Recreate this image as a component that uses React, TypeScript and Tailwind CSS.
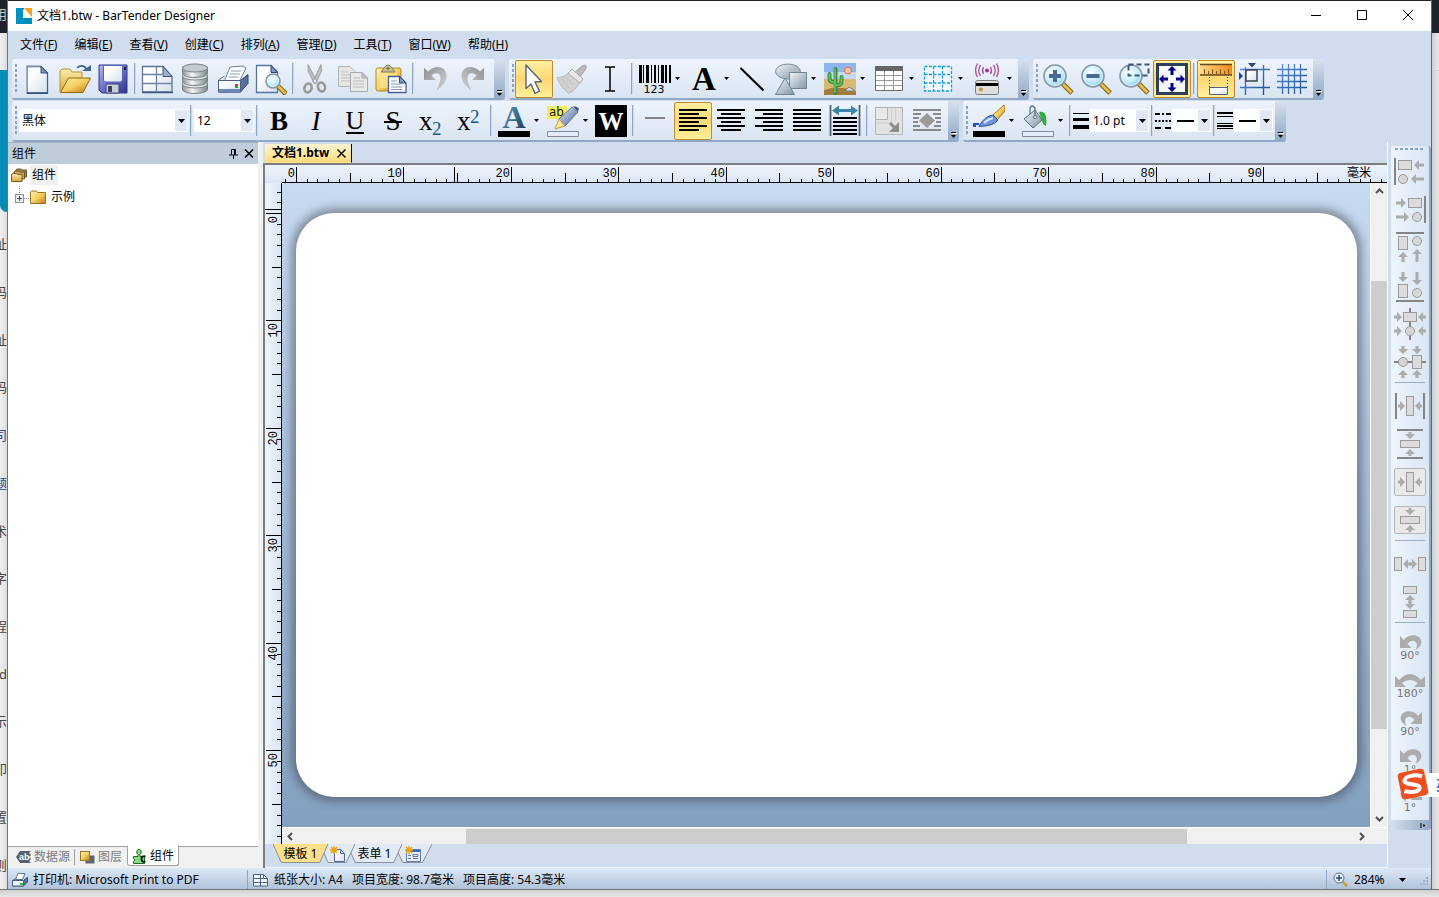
import React from "react";

type Kids = { children?: React.ReactNode };

const INK = "#000000";

function Defs() {
  return (
    <svg width="0" height="0" className="absolute" aria-hidden="true">
      <defs>
        <linearGradient id="paper" x1="0" y1="0" x2="1" y2="1">
          <stop offset="0.3" stopColor="#ffffff" />
          <stop offset="1" stopColor="#d5dfec" />
        </linearGradient>
        <linearGradient id="gold" x1="0" y1="0" x2="1" y2="1">
          <stop offset="0" stopColor="#fff0b0" />
          <stop offset="0.5" stopColor="#f6cf62" />
          <stop offset="1" stopColor="#b87a10" />
        </linearGradient>
        <linearGradient id="folder" x1="0" y1="0" x2="0" y2="1">
          <stop offset="0" stopColor="#fdeeb0" />
          <stop offset="1" stopColor="#d9a53a" />
        </linearGradient>
        <linearGradient id="floppy" x1="0" y1="0" x2="1" y2="1">
          <stop offset="0" stopColor="#b3b8ee" />
          <stop offset="0.5" stopColor="#6a70c4" />
          <stop offset="1" stopColor="#2f3590" />
        </linearGradient>
        <linearGradient id="metal" x1="0" y1="0" x2="1" y2="0">
          <stop offset="0" stopColor="#8d979c" />
          <stop offset="0.4" stopColor="#f4f6f7" />
          <stop offset="1" stopColor="#7b868c" />
        </linearGradient>
        <linearGradient id="steel" x1="0" y1="0" x2="1" y2="1">
          <stop offset="0" stopColor="#f2f6f9" />
          <stop offset="1" stopColor="#8095a4" />
        </linearGradient>
        <linearGradient id="blueprint" x1="0" y1="0" x2="1" y2="1">
          <stop offset="0" stopColor="#e8f1fb" />
          <stop offset="1" stopColor="#3c5a94" />
        </linearGradient>
        <linearGradient id="gridblue" x1="0" y1="0" x2="32" y2="32" gradientUnits="userSpaceOnUse">
          <stop offset="0" stopColor="#5b95e0" />
          <stop offset="1" stopColor="#1d4a94" />
        </linearGradient>
        <linearGradient id="gray" x1="0" y1="0" x2="1" y2="1">
          <stop offset="0" stopColor="#8f9092" />
          <stop offset="1" stopColor="#d2d4d6" />
        </linearGradient>
        <linearGradient id="letter" x1="0" y1="0" x2="1" y2="1">
          <stop offset="0" stopColor="#6aa3c6" />
          <stop offset="1" stopColor="#123a56" />
        </linearGradient>
        <linearGradient id="rulerfill" x1="0" y1="0" x2="1" y2="0">
          <stop offset="0" stopColor="#ffd98c" />
          <stop offset="1" stopColor="#f08a10" />
        </linearGradient>
        <radialGradient id="lens" cx="0.4" cy="0.35" r="0.7">
          <stop offset="0" stopColor="#ffffff" />
          <stop offset="0.6" stopColor="#c3ecfb" />
          <stop offset="1" stopColor="#74c4e8" />
        </radialGradient>
      </defs>
    </svg>
  );
}

function Ico({ children }: Kids) {
  return (
    <svg width="32" height="32" viewBox="0 0 32 32" fill="none" className="shrink-0" aria-hidden="true">
      {children}
    </svg>
  );
}

function Lens({ cx = 12, cy = 12, r = 11, children }: Kids & { cx?: number; cy?: number; r?: number }) {
  return (
    <>
      <path d={`M${cx + r * 0.7} ${cy + r * 0.7}L${cx + r + 6} ${cy + r + 6}`} stroke="#7d6118" strokeWidth="5" />
      <path d={`M${cx + r * 0.75} ${cy + r * 0.75}L${cx + r + 5.5} ${cy + r + 5.5}`} stroke="#e9bd4c" strokeWidth="3" />
      <circle cx={cx} cy={cy} r={r} fill="url(#lens)" stroke="#8797a8" strokeWidth="1.6" />
      <circle cx={cx} cy={cy} r={r - 1.6} stroke="#e4f7ff" strokeWidth="1" />
      {children}
    </>
  );
}

const TURN = "M5 5v12h12l-4.500-4.500c3-3 7-3 8.500 0 1.500 4-1 10-4 15.500 7-5 11-10 10.500-16C27 3 16 1 9 8.500z";

const icons: Record<string, React.ReactNode> = {
  new: (
    <>
      <path d="M6 3.500h14l6.500 6.500v20h-20.500z" fill="url(#paper)" stroke="#43628f" strokeWidth="1.300" />
      <path d="M5.500 30.500v-27.500h14" stroke="#9fb4cd" />
      <path d="M20 3.500v6.500h6.500z" fill="#7a99bd" stroke="#36527d" />
      <path d="M6 30.200h21" stroke="#36527d" strokeWidth="1.600" />
    </>
  ),
  open: (
    <>
      <path d="M1 29v-21l2-2h8l2 3h10v8" fill="url(#folder)" stroke="#b99135" />
      <path d="M1.500 29.500l8-14.500h22l-7.500 14.500z" fill="url(#gold)" stroke="#9a6a10" />
      <path d="M18 5c4-4 9-2 10 3" stroke="#3f6690" strokeWidth="1.600" />
      <path d="M23 8h9v-6z" fill="#3f6690" />
    </>
  ),
  save: (
    <>
      <path d="M2 2h28v28h-25l-3-3z" fill="url(#floppy)" stroke="#35398f" />
      <path d="M6.500 2.500h19v15l-2 1.500h-15l-2-1.500z" fill="url(#paper)" stroke="#5661bd" />
      <path d="M9 21h13v9h-13z" fill="#c8ced6" stroke="#3d4380" />
      <path d="M11 23h4v6h-4z" fill="#3a4259" />
      <path d="M27 4h2v3h-2z" fill="#20244f" />
    </>
  ),
  sheet: (
    <>
      <path d="M1.500 3.500h20.500l9 10v15.500h-29.500z" fill="url(#paper)" stroke="#5e7695" strokeWidth="1.300" />
      <path d="M15.500 4v25M1.500 11.500h20M1.500 20.500h29.500" stroke="#6d86a6" strokeWidth="1.300" />
      <path d="M22 3.500v10h9z" fill="#9bb1cb" stroke="#3f5a80" />
      <path d="M1 29.500h31" stroke="#3f5a80" strokeWidth="1.500" />
    </>
  ),
  db: (
    <>
      {[20, 12, 4].map((y) => (
        <g key={y}>
          <path d={`M3.500 ${y}v6c0 6 25 6 25 0v-6z`} fill="url(#metal)" stroke="#757f85" />
          <ellipse cx="16" cy={y + 1} rx="12.500" ry="4" fill={y === 4 ? "#c3cbcf" : "#e4e8ea"} stroke="#7a858b" />
        </g>
      ))}
    </>
  ),
  print: (
    <>
      <path d="M13 4l13-1 3 2-7 14h-15z" fill="#fff" stroke="#71819a" />
      <path d="M14 8h10M13 11h10M11.500 14h10" stroke="#8b9fb9" />
      <path d="M1.500 17l6-4M31 12l-8 6" stroke="#5b7196" />
      <path d="M1.500 17.500h22l7.500-6v9l-7.500 8.500h-22z" fill="#59719d" stroke="#33486f" />
      <path d="M1.500 17.500h22v11.500h-22z" fill="url(#paper)" stroke="#4b608a" />
      <path d="M2 26h21v3h-21z" fill="#7188b5" />
      <path d="M18 21h3v2h-3z" fill="#d33" />
      <path d="M18 23h3v2h-3z" fill="#2a3" />
    </>
  ),
  preview: (
    <>
      <path d="M1.500 2.500h14.500l6.500 6.500v20.500h-21z" fill="url(#paper)" stroke="#5674a0" strokeWidth="1.300" />
      <path d="M16 2.500v7h6.500z" fill="#7a99bd" stroke="#2e4a75" />
      <Lens cx={18} cy={18} r={7} />
    </>
  ),
  cut: (
    <>
      <path d="M9 1.500l9 17-2.500 2.500-6.500-13zM22 1.500l-8 17 2.500 2.500 6-13z" fill="#bdbdbd" stroke="#a2a2a2" />
      <ellipse cx="9" cy="25" rx="3.500" ry="4.500" stroke="#9a9a9a" strokeWidth="2.600" transform="rotate(20 9 25)" />
      <ellipse cx="22.500" cy="24" rx="3.500" ry="4.500" stroke="#9a9a9a" strokeWidth="2.600" transform="rotate(-20 22.500 24)" />
    </>
  ),
  copy: (
    <>
      <path d="M1.500 3.500h11.500l5 5v15h-16.500z" fill="#e6e6e6" stroke="#b3b3b3" />
      <path d="M4 9h7M4 12h11M4 15h11M4 18h11" stroke="#c4c4c4" />
      <path d="M13.500 9.500h11.500l5.500 5.500v13.500h-17z" fill="#e9e9e9" stroke="#a9a9a9" />
      <path d="M25 9.500v5.500h5.500z" fill="#c2c2c2" stroke="#a9a9a9" />
      <path d="M16 15h7M16 18h11M16 21h11M16 24h11" stroke="#bbb" />
    </>
  ),
  paste: (
    <>
      <path d="M2 5h22q2 0 2 2v18q0 3-3 3h-20q-2 0-2-2v-19q0-2 1-2z" fill="url(#gold)" stroke="#b2892c" />
      <path d="M5 10h17v15h-17z" fill="#ffe79a" opacity="0.600" />
      <path d="M6 9l3-4q4-6 8 0l3 4z" fill="#c6bd94" stroke="#857b50" />
      <path d="M13 4v3M11.500 5.500h3" stroke="#6a6140" />
      <path d="M13.500 13.500h11l6.500 6.500v9.500h-17.500z" fill="#fff" stroke="#46628e" strokeWidth="1.300" />
      <path d="M24.500 13.500v6.500h6.500z" fill="#7f9bc0" stroke="#2f4a78" />
      <path d="M16 18h6M16 21h11M16 24h11M16 26.500h11" stroke="#7b93b4" />
    </>
  ),
  undo: <path d={TURN} fill="url(#gray)" />,
  redo: <path transform="translate(32 0) scale(-1 1)" d={TURN} fill="url(#gray)" />,
  pointer: (
    <path d="M8 2l15.500 16.500-6.500.500 4.500 9-4.500 2.500-4-9.500-5 4.500z" fill="#fff" stroke="#53627e" strokeWidth="1.400" strokeLinejoin="round" />
  ),
  brush: (
    <>
      <path d="M18 10l8-7q3-2 4 0t-1 4l-6 8z" fill="#b9b9b9" stroke="#a3a3a3" />
      <path d="M1 14.500q8 0 12-5l11 10q-4 7-11 11Q5 25 1 14.500z" fill="#d2d2d2" stroke="#b8b8b8" />
      <path d="M12 10l4-4 11 10-3 4z" fill="#e8e8e8" stroke="#adadad" />
      <path d="M6 16l7 9M10 14l7 8" stroke="#bcbcbc" />
    </>
  ),
  ibeam: <path d="M11 4h4q1 0 1 1v22q0 1-1 1h-4M21 4h-4q-1 0-1 1v22q0 1 1 1h4" stroke={INK} strokeWidth="1.500" />,
  barcode: (
    <>
      {[[0, 3], [4, 1], [7, 3], [12, 1], [15, 2], [19, 1], [22, 3], [26, 2], [30, 2]].map(([x, w]) => (
        <rect key={x} x={x} y="2" width={w} height="18" fill={INK} />
      ))}
      <text x="15" y="30" textAnchor="middle" fontSize="11" fill={INK} fontFamily="DejaVu Sans">123</text>
    </>
  ),
  text: <text x="16" y="27" textAnchor="middle" fontSize="33" fontWeight="700" fill={INK} fontFamily="Liberation Serif">A</text>,
  line: <path d="M4.500 5l23 22.500" stroke={INK} strokeWidth="2" />,
  shapes: (
    <>
      <ellipse cx="13" cy="8.500" rx="12.500" ry="7.500" fill="url(#steel)" stroke="#77909d" />
      <path d="M14.500 9.500h17v16h-17z" fill="url(#steel)" stroke="#6d8593" />
      <path d="M10 15l9.500 16.500h-19z" fill="url(#steel)" stroke="#6d8593" />
    </>
  ),
  picture: (
    <>
      <path d="M0 0h32v17H0z" fill="#8fb4f2" />
      <path d="M0 9h32v8H0z" fill="#c6d9f6" />
      <path d="M0 16h32v16H0z" fill="#d8b971" />
      <path d="M0 27q16-5 32 1v4H0z" fill="#a27d3a" />
      <circle cx="24" cy="7.500" r="3.500" fill="#f7c7a2" stroke="#e4683a" />
      <path d="M11.500 30v-24M5.500 11v4q0 4 4 4h2M17.500 14v4q0 4-4 4h-2" stroke="#3b8a3c" strokeWidth="4" strokeLinecap="round" />
      <path d="M11 29v-23M5.500 11v4q0 4 4 4h2M17.500 14v4q0 4-4 4h-2" stroke="#62b95d" strokeWidth="2" strokeLinecap="round" />
      <path d="M21 28l4-4 5 3v1z" fill="#d7dbe6" stroke="#7c8090" />
    </>
  ),
  table: (
    <>
      <path d="M2.500 3.500h27v24h-27z" fill="#fff" stroke="#6b6b6b" />
      <path d="M2 3h28v5H2z" fill="#666" />
      <path d="M3 12.500h26M3 17.500h26M3 22.500h26M11.500 8v19M20.500 8v19" stroke="#9a9a9a" />
    </>
  ),
  dashgrid: (
    <>
      <path d="M2 3h27v25H2z" fill="#f4faff" />
      <path d="M2.500 3.500h27v24.500h-27zM11.500 3.500v24.500M20.500 3.500v24.500M2.500 11.500h27M2.500 20h27" stroke="#12a0dd" strokeWidth="1.300" strokeDasharray="3 1.500" />
    </>
  ),
  rfid: (
    <>
      <circle cx="16" cy="7.500" r="2" fill="#a2348e" />
      <path d="M12.500 4q-2 3.500 0 7M19.500 4q2 3.500 0 7M9.500 2q-3.500 5.500 0 11M22.500 2q3.500 5.500 0 11M6.500.500q-4 7 0 13.500M25.500.500q4 7 0 13.500" stroke="#b0559f" strokeWidth="1.400" />
      <rect x="4.500" y="17.500" width="23" height="14" rx="2" fill="#dedede" stroke="#7d7d7d" />
      <path d="M5 20h22v3H5z" fill="#000" />
      <circle cx="10" cy="26.500" r="2" fill="#cf9338" />
    </>
  ),
  zoomin: (
    <Lens cx={13} cy={13}>
      <path d="M13 7v12M7 13h12" stroke="#4a6a92" strokeWidth="4" />
    </Lens>
  ),
  zoomout: (
    <Lens cx={13} cy={13}>
      <path d="M6.500 13h13" stroke="#4a6a92" strokeWidth="4" />
    </Lens>
  ),
  zoombox: (
    <>
      <Lens cx={13} cy={13} />
      <path d="M10.500 1.500h20v11h-20z" stroke="#3c577d" strokeWidth="2" strokeDasharray="5 3" />
    </>
  ),
  fit: (
    <>
      <rect x="1.500" y="1.500" width="29" height="29" fill="#f4f8fd" stroke="#2f3f58" strokeWidth="3" />
      <path d="M16 3l4.500 4.500h-3v4.500h-3v-4.500h-3zM16 29l4.500-4.500h-3v-4.500h-3v4.500h-3zM3 16l4.500-4.500v3h4.500v3h-4.500v3zM29 16l-4.500-4.500v3h-4.500v3h4.500v3z" fill="#00008c" />
    </>
  ),
  ruler: (
    <>
      <path d="M0 2h32v10H0z" fill="url(#rulerfill)" />
      <path d="M0 1.500h32M0 12h32" stroke="#60461a" strokeWidth="1.600" />
      <path d="M4.500 6v5M8.500 8v3M12.500 6v5M16.500 8v3M20.500 6v5M24.500 8v3M28.500 6v5" stroke="#7c5a20" />
      <path d="M9.500 14v11M27.500 14v11" stroke="#3d3d3d" strokeDasharray="1 2" />
      <path d="M9.500 24.500h18v7h-18z" fill="url(#paper)" stroke="#51617a" />
    </>
  ),
  snap: (
    <>
      <path d="M7.500 4v28M25.500 2v30M2 6.500h30M2 24.500h30" stroke="url(#gridblue)" strokeWidth="1.400" />
      <path d="M8 7h11v11h-11z" fill="url(#paper)" stroke="#3e4451" strokeWidth="1.500" />
      <path d="M10 0h8l-4 4.500zM1 9v8l4-4z" fill="#234683" />
    </>
  ),
  grid: (
    <path d="M6.500 1v30M12.500 1v30M18.500 1v30M24.500 1v30M1 6.500h30M1 12.500h30M1 18.500h30M1 24.500h30" stroke="url(#gridblue)" strokeWidth="1.300" />
  ),
  bold: <text x="16" y="25" textAnchor="middle" fontSize="27" fontWeight="700" fill={INK} fontFamily="Liberation Serif">B</text>,
  italic: <text x="15" y="25" textAnchor="middle" fontSize="27" fontStyle="italic" fill={INK} fontFamily="Liberation Serif">I</text>,
  underline: (
    <>
      <text x="16" y="24" textAnchor="middle" fontSize="26" fill={INK} fontFamily="Liberation Serif">U</text>
      <path d="M7 28h18" stroke={INK} strokeWidth="2" />
    </>
  ),
  strike: (
    <>
      <text x="16" y="25" textAnchor="middle" fontSize="27" fill={INK} fontFamily="Liberation Serif">S</text>
      <path d="M7 17h18" stroke={INK} strokeWidth="2" />
    </>
  ),
  sub: (
    <>
      <text x="4" y="25" fontSize="27" fill={INK} fontFamily="Liberation Serif">x</text>
      <text x="17" y="30" fontSize="19" fill="#145a92" fontFamily="Liberation Serif">2</text>
    </>
  ),
  sup: (
    <>
      <text x="4" y="25" fontSize="27" fill={INK} fontFamily="Liberation Serif">x</text>
      <text x="17" y="18" fontSize="19" fill="#145a92" fontFamily="Liberation Serif">2</text>
    </>
  ),
  color: (
    <>
      <text x="16" y="23" textAnchor="middle" fontSize="32" fontWeight="700" fill="url(#letter)" fontFamily="Liberation Serif">A</text>
      <path d="M0 26h32v6H0z" fill="#000" />
    </>
  ),
  highlight: (
    <>
      <path d="M0 1h20v13H0z" fill="#f2ee60" />
      <text x="2" y="11" fontSize="12" fill="#222" fontFamily="DejaVu Sans">ab</text>
      <path d="M12 14l13-12 6 5-13 14z" fill="url(#blueprint)" stroke="#6677a0" />
      <path d="M26 1.500l5 5 1-3-3-2z" fill="#3d4e80" />
      <path d="M12 14l6 7-10 3z" fill="#fce7a0" stroke="#c49d3d" />
      <path d="M.500 26.500h31v5H.500z" fill="#e5edf8" stroke="#808c9a" />
    </>
  ),
  white: (
    <>
      <path d="M0 0h32v32H0z" fill="#000" />
      <text x="16" y="25" textAnchor="middle" fontSize="25" fontWeight="700" fill="#fff" fontFamily="Liberation Serif">W</text>
    </>
  ),
  dash: <path d="M6 13h20" stroke="#858585" strokeWidth="2" />,
  fitwidth: (
    <>
      <path d="M1.500 0v31M30.500 0v31" stroke="#4e6175" strokeWidth="1.800" />
      <path d="M3 5.500l7-5v3.500h12v-3.500l7 5-7 5v-3.500h-12v3.500z" fill="#3a86ad" />
      <path d="M4 13h24M4 17h24M4 21h24M4 25h24M4 29h24" stroke="#000" strokeWidth="2" />
    </>
  ),
  corner: (
    <>
      <path d="M2.500 2.500h27v27h-27z" fill="#e2e2e2" stroke="#b5b5b5" />
      <path d="M2.500 2.500h12v12h-12z" fill="#e8e8e8" stroke="#b0b0b0" />
      <path d="M18.500 3v15h-15M22.500 3v12" stroke="#cfcfcf" />
      <path d="M17 18l6 6" stroke="#8c8c8c" strokeWidth="3" />
      <path d="M26 17v10h-10z" fill="#8c8c8c" />
    </>
  ),
  wrap: (
    <>
      <path d="M2 5h28M2 9h8M22 9h8M2 13h6M24 13h6M2 17h5M25 17h5M2 21h7M23 21h7M2 25h28" stroke="#8a8a8a" strokeWidth="2" />
      <path d="M16 8l8 7.500-8 7.500-8-7.500z" fill="#9a9a9a" />
    </>
  ),
  linecolor: (
    <>
      <path d="M20 10l11-10h1v6l-8 9z" fill="url(#gold)" stroke="#a8791a" />
      <path d="M6 21q6-10 14-11l5 5q-4 6-19 6.500z" fill="#6f92e0" stroke="#2e55b4" />
      <path d="M0 22v-4h6v2h-3v2z" fill="#1f56c4" />
      <path d="M11 18q4-4 9-5" stroke="#dbe7fd" strokeWidth="2" />
      <path d="M0 26h32v6H0z" fill="#000" />
    </>
  ),
  fill: (
    <>
      <path d="M17 7q9-2 7 14-3-1-4-5z" fill="#2fae3b" />
      <path d="M2 14l11-9 7 10-9 8z" fill="url(#steel)" stroke="#56697f" />
      <path d="M8 9v-6q2-4 5 0v10" stroke="#62748a" strokeWidth="1.300" />
      <circle cx="13" cy="12" r="1.500" fill="#fff" stroke="#5a6b80" />
      <path d="M.500 26.500h31v5H.500z" fill="#e5edf8" stroke="#808c9a" />
    </>
  ),
};

function alignLines(kind: "l" | "c" | "r" | "j") {
  return [5, 9, 13, 17, 21, 25].map((y, i) => {
    const w = kind === "j" || i % 2 === 0 ? 28 : 20;
    const x = kind === "r" ? 30 - w : kind === "c" ? 16 - w / 2 : 2;
    return <rect key={y} x={x} y={y - 1} width={w} height="2" fill={INK} />;
  });
}
icons.left = alignLines("l");
icons.center = alignLines("c");
icons.right = alignLines("r");
icons.justify = alignLines("j");

function Caret({ className = "" }: { className?: string }) {
  return (
    <svg width="7" height="4" viewBox="0 0 7 4" className={`shrink-0 ${className}`} aria-hidden="true">
      <path d="M0 0h7l-3.500 4z" fill="#000" />
    </svg>
  );
}

function SmallCaret() {
  return (
    <svg width="5" height="3" viewBox="0 0 5 3" className="shrink-0" aria-hidden="true">
      <path d="M0 0h5l-2.500 3z" fill="#000" />
    </svg>
  );
}

function Tool({ name, label, on, drop }: { name: string; label: string; on?: boolean; drop?: boolean }) {
  return (
    <button
      type="button"
      aria-label={label}
      className={`flex h-[38px] shrink-0 items-center border ${drop ? "w-[49px] gap-1 pl-[3px]" : "w-[38px] justify-center"} ${
        on ? "rounded-[2px] border-[#c08a34] bg-linear-to-b from-[#fff0a0] via-[#ffd873] to-[#fff09a]" : "border-transparent"
      }`}
    >
      <Ico>{icons[name]}</Ico>
      {drop && <SmallCaret />}
    </button>
  );
}

function Sep() {
  return <span className="mx-[2px] h-[31px] w-px shrink-0 border-r border-white/60 bg-[#8ea4c3] box-content" />;
}

function Group({ children, label }: Kids & { label: string }) {
  return (
    <div role="toolbar" aria-label={label} className="flex h-[41px] shrink-0 overflow-hidden rounded-[3px] border-b-2 border-[#93a8c3]">
      <div className="flex items-center bg-linear-to-b from-[#edf4fd] to-[#dae5f2] pr-[2px]">
        <span className="mr-px ml-[3px] h-[30px] w-[2px] bg-[repeating-linear-gradient(to_bottom,#8ba3c7_0_3px,transparent_3px_5px)]" />
        {children}
      </div>
      <button type="button" aria-label={`${label}…`} className="flex w-[11px] flex-col items-center justify-end gap-[2px] bg-linear-to-b from-[#d5e1ee] to-[#93a9c5] pb-[2px]">
        <span className="h-px w-[5px] bg-black shadow-[1px_1px_0_#fff]" />
        <SmallCaret />
      </button>
    </div>
  );
}

function Combo({ label, value, className, children }: Kids & { label: string; value: string; className: string }) {
  return (
    <div className={`grid h-[23px] shrink-0 items-center border border-white bg-white ${className}`}>
      <select aria-label={label} className="col-start-1 row-start-1 h-[21px] w-full appearance-none bg-transparent pl-[2px] text-xs outline-none">
        <option>{value}</option>
      </select>
      {children && <span className="pointer-events-none col-start-1 row-start-1 pl-[4px]">{children}</span>}
      <span className="pointer-events-none col-start-1 row-start-1 flex h-[21px] w-[12px] items-center justify-center justify-self-end bg-[#dfe8f4]">
        <Caret />
      </span>
    </div>
  );
}

const menus = [
  ["文件", "F"], ["编辑", "E"], ["查看", "V"], ["创建", "C"], ["排列", "A"], ["管理", "D"], ["工具", "T"], ["窗口", "W"], ["帮助", "H"],
];

function TitleBar() {
  return (
    <header className="flex h-[31px] shrink-0 items-center border-t border-[#20222c] bg-white pl-2">
      <svg width="16" height="16" viewBox="0 0 16 16" aria-hidden="true">
        <path d="M0 0h8v8l8 2v6H0z" fill="#0090bd" />
        <path d="M8 0h8v9z" fill="#f9a11b" />
        <path d="M7 1l8 9h-8z" fill="#fff" />
      </svg>
      <h1 className="ml-[5px] flex-1 text-xs">文档1.btw - BarTender Designer</h1>
      <button type="button" aria-label="最小化" className="flex w-[46px] justify-center">
        <svg width="12" height="12" viewBox="0 0 12 12"><path d="M1 5.500h10" stroke="#000" /></svg>
      </button>
      <button type="button" aria-label="最大化" className="flex w-[46px] justify-center">
        <svg width="12" height="12" viewBox="0 0 12 12"><path d="M1.500 0.500h9v9h-9z" fill="none" stroke="#000" /></svg>
      </button>
      <button type="button" aria-label="关闭" className="flex w-[46px] justify-center">
        <svg width="12" height="12" viewBox="0 0 12 12"><path d="M1 0l10 10M11 0L1 10" stroke="#000" /></svg>
      </button>
    </header>
  );
}

function Toolbars() {
  return (
    <div className="flex shrink-0 flex-col gap-px pl-1">
      <div className="flex gap-1">
        <Group label="标准">
          <Tool name="new" label="新建" /><Tool name="open" label="打开" /><Tool name="save" label="保存" />
          <Sep />
          <Tool name="sheet" label="页面设置" /><Tool name="db" label="数据库" /><Tool name="print" label="打印" /><Tool name="preview" label="预览" />
          <Sep />
          <Tool name="cut" label="剪切" /><Tool name="copy" label="复制" /><Tool name="paste" label="粘贴" />
          <Sep />
          <Tool name="undo" label="撤消" /><Tool name="redo" label="恢复" />
        </Group>
        <Group label="对象">
          <Tool name="pointer" label="选择" on /><Tool name="brush" label="格式刷" /><Tool name="ibeam" label="文本光标" />
          <Sep />
          <Tool name="barcode" label="条形码" drop /><Tool name="text" label="文本" drop /><Tool name="line" label="线条" />
          <Tool name="shapes" label="形状" drop /><Tool name="picture" label="图片" drop /><Tool name="table" label="表格" drop />
          <Tool name="dashgrid" label="布局网格" drop /><Tool name="rfid" label="编码器" drop />
        </Group>
        <Group label="视图">
          <Tool name="zoomin" label="放大" /><Tool name="zoomout" label="缩小" /><Tool name="zoombox" label="缩放选区" /><Tool name="fit" label="适合窗口" on />
          <Sep />
          <Tool name="ruler" label="标尺" on /><Tool name="snap" label="对齐" /><Tool name="grid" label="网格" />
        </Group>
      </div>
      <div className="flex gap-1">
        <Group label="文本格式">
          <Combo label="字体" value="黑体" className="ml-px w-[169px]" />
          <Sep />
          <Combo label="字号" value="12" className="w-[60px]" />
          <Sep />
          <Tool name="bold" label="粗体" /><Tool name="italic" label="斜体" /><Tool name="underline" label="下划线" />
          <Tool name="strike" label="删除线" /><Tool name="sub" label="下标" /><Tool name="sup" label="上标" />
          <Sep />
          <Tool name="color" label="文本颜色" drop /><Tool name="highlight" label="突出显示" drop /><Tool name="white" label="反白" />
          <Sep />
          <Tool name="dash" label="无" /><Tool name="left" label="左对齐" on /><Tool name="center" label="居中" />
          <Tool name="right" label="右对齐" /><Tool name="justify" label="两端对齐" /><Tool name="fitwidth" label="适合宽度" />
          <Sep />
          <Tool name="corner" label="适合大小" /><Tool name="wrap" label="环绕" />
        </Group>
        <Group label="线条格式">
          <Tool name="linecolor" label="线条颜色" drop /><Tool name="fill" label="填充颜色" drop />
          <Sep />
          <svg width="17" height="20" viewBox="0 0 17 20" className="shrink-0" aria-hidden="true">
            <path d="M0 2.500h16" stroke="#000" /><path d="M0 8.500h16" stroke="#000" strokeWidth="3" /><path d="M0 16h16" stroke="#000" strokeWidth="4" />
          </svg>
          <Combo label="线条粗细" value="1.0 pt" className="w-[59px]" />
          <Sep />
          <svg width="17" height="18" viewBox="0 0 17 18" className="shrink-0" aria-hidden="true">
            <path d="M0 2h16" stroke="#000" strokeWidth="2" strokeDasharray="5 2 2 2" />
            <path d="M0 9h16" stroke="#000" strokeWidth="2" strokeDasharray="2 1.500" />
            <path d="M0 16h16" stroke="#000" strokeWidth="2" strokeDasharray="6 4" />
          </svg>
          <Combo label="虚线样式" value="" className="w-[39px]">
            <svg width="17" height="2" className="block"><path d="M0 1h17" stroke="#000" strokeWidth="2" /></svg>
          </Combo>
          <Sep />
          <svg width="17" height="17" viewBox="0 0 17 17" className="shrink-0" aria-hidden="true">
            <path d="M0 1h16" stroke="#000" strokeWidth="2" /><path d="M0 4.500h16M0 11.500h16M0 16.500h16" stroke="#000" /><path d="M0 14h16" stroke="#000" strokeWidth="2" />
          </svg>
          <Combo label="复合线样式" value="" className="w-[39px]">
            <svg width="17" height="2" className="block"><path d="M0 1h17" stroke="#000" strokeWidth="2" /></svg>
          </Combo>
        </Group>
      </div>
    </div>
  );
}

function FolderIcon({ stack }: { stack?: boolean }) {
  return (
    <svg width="16" height="14" viewBox="0 0 16 14" aria-hidden="true">
      {stack && <path d="M4.500 3l1.500-2h4l1 1h4.500v7h-11z" fill="#a8894a" stroke="#6a5527" />}
      {stack && <path d="M2.500 5l1.500-2h4l1 1h4.500v7h-11z" fill="#c7a65c" stroke="#6a5527" />}
      {stack ? (
        <path d="M.500 7l1-1.500h4l1 1h4.500v7h-10.500z" fill="url(#folder)" stroke="#7a5c1c" />
      ) : (
        <path d="M.500 2l1-1h5l1 1.500h8v11h-15z" fill="url(#gold)" stroke="#9a7420" />
      )}
    </svg>
  );
}

function SidePanel() {
  return (
    <aside className="flex w-[250px] shrink-0 flex-col bg-[#f0f0f0]">
      <div className="flex h-[22px] items-center border-t border-[#9fb0c4] bg-[#bfccd9] pr-1 pl-1">
        <h2 className="flex-1 text-xs">组件</h2>
        <button type="button" aria-label="固定" className="mr-[6px]">
          <svg width="9" height="10" viewBox="0 0 9 10" className="block"><path d="M2.500 5.500v-5h4v5M5.500 1v5M0 6h9M4.500 6v4" stroke="#000" fill="none" /></svg>
        </button>
        <button type="button" aria-label="关闭面板">
          <svg width="10" height="9" viewBox="0 0 10 9" className="block"><path d="M1 0.500l8 8M9 0.500l-8 8" stroke="#000" strokeWidth="1.500" /></svg>
        </button>
      </div>
      <ul className="flex-1 bg-white pl-[3px] text-xs">
        <li className="flex h-[21px] items-center gap-[3px]">
          <FolderIcon stack />
          <span className="bg-[#f0f0f0] px-[2px] leading-5">组件</span>
        </li>
        <li className="flex h-[23px] items-center pl-1">
          <svg width="15" height="22" viewBox="0 0 15 22" aria-hidden="true">
            <path d="M4.500 0v8M9 12.500h6" stroke="#888" strokeDasharray="1 1" />
            <rect x="0.500" y="8.500" width="8" height="8" fill="#eef1f5" stroke="#919191" />
            <path d="M2 12.500h5M4.500 10v5" stroke="#2b4b8c" />
          </svg>
          <FolderIcon />
          <span className="ml-[5px]">示例</span>
        </li>
      </ul>
      <div role="tablist" className="flex h-[22px] items-start border-t border-[#a0a0a0] text-xs text-[#7b7b7b]">
        <button type="button" role="tab" className="my-[2px] flex h-4 items-center gap-[2px] border-r border-[#a0a0a0] pr-1 pl-2">
          <svg width="16" height="12" viewBox="0 0 16 12" aria-hidden="true">
            <path d="M0 6l4-6h11l-2 2 2 2-2 2 2 2-2 2 2 2H4z" fill="#56606e" />
            <text x="3" y="9" fontSize="9" fontWeight="700" fill="#fff" fontFamily="Liberation Sans">ab</text>
          </svg>
          <span>数据源</span>
        </button>
        <button type="button" role="tab" className="my-[2px] flex h-4 items-center gap-[3px] pr-[5px] pl-[5px]">
          <svg width="15" height="13" viewBox="0 0 15 13" aria-hidden="true">
            <rect x="5.500" y="4.500" width="9" height="8" fill="#5d6670" /><rect x="0.500" y="0.500" width="9" height="9" fill="url(#gold)" stroke="#98762c" />
          </svg>
          <span>图层</span>
        </button>
        <button type="button" role="tab" aria-selected="true" className="-mt-px flex h-5 items-center gap-[3px] rounded-b-[3px] border border-t-0 border-[#a0a0a0] bg-white pr-1 pl-[5px] text-black">
          <svg width="14" height="16" viewBox="0 0 14 16" aria-hidden="true">
            <path d="M.500 8.500h4.500v-2q-2-1-1-4 2-3 4 0 1 3-1 4v2h4.500v7h-11v-2q3-1 0-3z" fill="#8cd98a" stroke="#1e6b24" />
            <path d="M12.500 8.500q-4-1-4 2.500t4 2.500" stroke="#0e2410" strokeWidth="2" fill="none" />
          </svg>
          <span>组件</span>
        </button>
      </div>
    </aside>
  );
}

const MM = 10.744;
const ticks = Array.from({ length: 260 }, (_, i) => i - 2);

function HRuler() {
  return (
    <svg width="100%" height="18" className="block" aria-hidden="true">
      {ticks.map((t) => {
        const x = Math.round(14 + t * MM) + 0.5;
        const y = t < 99 && t % 10 === 0 ? 2 : t < 99 && t % 5 === 0 ? 8 : 14;
        return <path key={t} d={`M${x} ${y}V18`} stroke="#000" />;
      })}
      <path d="M172.500 2V18" stroke="#000" />
      <rect y="17" width="100%" height="1" fill="#000" />
      {ticks.filter((t) => t >= 0 && t < 99 && t % 10 === 0).map((t) => (
        <text key={t} x={Math.round(14 + t * MM) - 1} y="12" textAnchor="end" fontSize="12" fontFamily="Liberation Mono">{t}</text>
      ))}
    </svg>
  );
}

function VRuler() {
  return (
    <svg width="17" height="100%" className="absolute inset-0" aria-hidden="true">
      {ticks.map((t) => {
        const y = Math.round(31 + t * MM) - 0.5;
        const x = t < 54 && t % 10 === 0 ? 1 : t < 60 && t % 5 === 0 ? 7 : 12;
        return <path key={t} d={`M${x} ${y}H17`} stroke="#000" />;
      })}
      <path d="M0 26.500H17" stroke="#000" />
      <rect x="16" width="1" height="100%" fill="#000" />
      {[0, 10, 20, 30, 40, 50].map((t) => (
        <text key={t} transform={`translate(12 ${Math.round(31 + t * MM) + 2}) rotate(-90)`} textAnchor="end" fontSize="12" fontFamily="Liberation Mono">{t}</text>
      ))}
    </svg>
  );
}

function Chevron({ d }: { d: string }) {
  return (
    <svg width="9" height="9" viewBox="0 0 9 9" className="block" aria-hidden="true"><path d={d} stroke="#505050" strokeWidth="2" fill="none" /></svg>
  );
}

function SheetTab({ children, w, on, z, label }: Kids & { w: string; on?: boolean; z: string; label: string }) {
  return (
    <button type="button" role="tab" aria-label={label} className={`relative -mr-2 flex h-[19px] items-center justify-center ${w} ${z}`}>
      <svg className="absolute inset-0 -z-10 h-full w-full" viewBox="0 0 100 19" preserveAspectRatio="none" aria-hidden="true">
        <path d={w === "w-[55px]" ? "M0 0L15 18.500H85L100 0" : "M0 0L23 18.500H75L100 0"} fill={on ? "#ffe08a" : "#e2eaf6"} stroke="#8b8f96" vectorEffect="non-scaling-stroke" />
      </svg>
      {children}
    </button>
  );
}

function Spark() {
  return <path d="M4 0v8M0 4h8M1 1l6 6M7 1l-6 6" stroke="#f5a300" strokeWidth="1.400" />;
}

function Workspace() {
  return (
    <main className="flex min-w-0 flex-1 flex-col bg-[#d0ddee]">
      <div className="flex h-[21px] shrink-0 items-end pl-[2px]">
        <div className="flex h-[19px] items-center border-r border-b border-r-black border-b-[#ffe08a] bg-linear-to-b from-[#fff4d4] to-[#ffdb78] pr-[5px] pl-[7px]">
          <span className="text-xs font-bold">文档1.btw</span>
          <button type="button" aria-label="关闭文档" className="ml-2">
            <svg width="9" height="9" viewBox="0 0 9 9" className="block"><path d="M0.500 0.500l8 8M8.500 0.500l-8 8" stroke="#000" strokeWidth="1.400" /></svg>
          </button>
        </div>
      </div>
      <div className="flex min-h-0 flex-1 flex-col border-t-2 border-l-2 border-t-[#7b7d80] border-l-[#7b7d80]">
        <div className="flex h-[18px] shrink-0 bg-linear-to-b from-[#edf4fd] to-[#dae6f3]">
          <div className="w-[17px] shrink-0" />
          <div className="relative min-w-0 flex-1">
            <HRuler />
            <span className="absolute top-0 right-4 text-xs leading-4">毫米</span>
          </div>
        </div>
        <div className="flex min-h-0 flex-1">
          <div className="relative w-[17px] shrink-0 overflow-hidden bg-linear-to-r from-[#edf4fd] to-[#dae6f3]"><VRuler /></div>
          <div className="flex min-w-0 flex-1 flex-col">
            <div className="flex min-h-0 flex-1">
              <div className="flex min-w-0 flex-1 overflow-hidden bg-linear-to-b from-[#c8daf0] to-[#84a0c0] pt-[30px] pr-[13px] pb-[30px] pl-[14px]">
                <div className="flex-1 rounded-[38px] bg-white shadow-[0_0_9px_5px_rgba(50,55,65,0.45)]" />
              </div>
              <div className="flex w-[17px] shrink-0 flex-col items-center border-l border-white bg-[#f0f0f0]">
                <button type="button" aria-label="向上滚动" className="flex h-[17px] items-center"><Chevron d="M1 6l3.500-3.500L8 6" /></button>
                <span className="flex-[81]" />
                <span className="w-full flex-[448] bg-[#cdcdcd]" />
                <span className="flex-[81]" />
                <button type="button" aria-label="向下滚动" className="flex h-[17px] items-center"><Chevron d="M1 3l3.500 3.500L8 3" /></button>
              </div>
            </div>
            <div className="flex h-[17px] shrink-0 items-center border-t border-white bg-[#f0f0f0]">
              <button type="button" aria-label="向左滚动" className="flex w-[17px] justify-center"><Chevron d="M6 1L2.500 4.500 6 8" /></button>
              <span className="flex-[167]" />
              <span className="h-[15px] flex-[721] bg-[#cdcdcd]" />
              <span className="flex-[166]" />
              <button type="button" aria-label="向右滚动" className="flex w-[17px] justify-center"><Chevron d="M3 1l3.500 3.500L3 8" /></button>
              <span className="w-[17px]" />
            </div>
          </div>
        </div>
        <div role="tablist" className="isolate flex h-[24px] shrink-0 border-b border-[#eef2f8] pl-2 text-xs">
          <SheetTab w="w-[55px]" z="z-40" on label="模板 1">模板 1</SheetTab>
          <SheetTab w="w-[35px]" z="z-30" label="新建模板">
            <svg width="16" height="16" viewBox="0 0 16 16" fill="none" aria-hidden="true">
              <path d="M4.500 3.500h6l4 4v8h-10z" fill="url(#paper)" stroke="#4d6790" /><path d="M10.500 3.500v4h4" stroke="#4d6790" /><Spark />
            </svg>
          </SheetTab>
          <SheetTab w="w-[55px]" z="z-20" label="表单 1">表单 1</SheetTab>
          <SheetTab w="w-[38px]" z="z-10" label="新建表单">
            <svg width="16" height="16" viewBox="0 0 16 16" fill="none" aria-hidden="true">
              <path d="M1.500 3.500h14v12h-14z" fill="#e9effa" stroke="#5a7cb8" /><path d="M3 5h12" stroke="#3b68bd" strokeWidth="2" />
              <path d="M3 9.500h3M3 12.500h3M8 8.500h5v2h-5zM8 12.500h5" stroke="#67788f" /><Spark />
            </svg>
          </SheetTab>
        </div>
      </div>
    </main>
  );
}

const G = "#acacac";
function Arrow({ x, y, r, len = 10 }: { x: number; y: number; r: number; len?: number }) {
  return <path transform={`translate(${x} ${y}) rotate(${r})`} d={`M0 0l-5-5v3.500h-${len - 5}v3h${len - 5}v3.500z`} fill={G} />;
}
const box = (x: number, y: number, w: number, h: number) => <rect x={x} y={y} width={w} height={h} fill="#dcdcdc" stroke="#9b9b9b" />;
const dot = (cx: number, cy: number) => <circle cx={cx} cy={cy} r="4.500" fill="#d6d6d6" stroke="#9b9b9b" />;
const bar = (d: string) => <path d={d} stroke="#858585" strokeWidth="2" />;
const ROT = "M0 1v12h11.500l-4-4c3-4 7-4 9-1 1 2 0 5-1 7 6-4 7-8 5-11C18-1 8-1 4 5z";

const sideGroups: { label: string; art: React.ReactNode }[][] = [
  [
    { label: "左对齐对象", art: <>{bar("M1 2v27")}{box(4.5, 4.5, 13, 9)}{dot(9, 23)}<Arrow x={20} y={9} r={180} /><Arrow x={17} y={23} r={180} len={13} /></> },
    { label: "右对齐对象", art: <>{bar("M31 2v27")}{box(14.5, 4.5, 13, 9)}{dot(23, 23)}<Arrow x={12} y={9} r={0} /><Arrow x={15} y={23} r={0} len={13} /></> },
    { label: "顶端对齐", art: <>{bar("M2 1h28")}{box(4.5, 4.5, 9, 13)}{dot(23, 9)}<Arrow x={9} y={20} r={-90} /><Arrow x={23} y={17} r={-90} len={13} /></> },
    { label: "底端对齐", art: <>{bar("M2 31h28")}{box(4.5, 14.5, 9, 13)}{dot(23, 23)}<Arrow x={9} y={12} r={90} /><Arrow x={23} y={15} r={90} len={13} /></> },
    { label: "水平居中对齐", art: <>{bar("M16 0v32")}{box(9.5, 4.5, 13, 9)}{dot(16, 23)}<Arrow x={8} y={9} r={0} len={8} /><Arrow x={24} y={9} r={180} len={8} /><Arrow x={8} y={23} r={0} len={8} /><Arrow x={24} y={23} r={180} len={8} /></> },
    { label: "垂直居中对齐", art: <>{bar("M0 16h32")}{box(18.5, 9.5, 9, 13)}{dot(9, 16)}<Arrow x={9} y={8} r={90} len={8} /><Arrow x={23} y={8} r={90} len={8} /><Arrow x={9} y={24} r={-90} len={8} /><Arrow x={23} y={24} r={-90} len={8} /></> },
  ],
  [
    { label: "模板水平居中", art: <>{bar("M2 3v26M30 3v26")}{box(12.5, 6.5, 7, 19)}<Arrow x={11} y={16} r={0} len={7} /><Arrow x={21} y={16} r={180} len={7} /></> },
    { label: "模板垂直居中", art: <>{bar("M3 2h26M3 30h26")}{box(6.5, 12.5, 19, 7)}<Arrow x={16} y={11} r={90} len={7} /><Arrow x={16} y={21} r={-90} len={7} /></> },
    { label: "容器水平居中", art: <><rect x="0.500" y="2.500" width="31" height="27" rx="2" fill="#e9e9e9" stroke="#b5b5b5" />{box(12.5, 6.5, 7, 19)}<Arrow x={11} y={16} r={0} len={7} /><Arrow x={21} y={16} r={180} len={7} /></> },
    { label: "容器垂直居中", art: <><rect x="0.500" y="2.500" width="31" height="27" rx="2" fill="#e9e9e9" stroke="#b5b5b5" />{box(6.5, 12.5, 19, 7)}<Arrow x={16} y={11} r={90} len={7} /><Arrow x={16} y={21} r={-90} len={7} /></> },
  ],
  [
    { label: "水平分布", art: <>{box(0.5, 9.5, 7, 13)}{box(24.5, 9.5, 7, 13)}<Arrow x={23} y={16} r={0} len={8} /><Arrow x={9} y={16} r={180} len={8} /></> },
    { label: "垂直分布", art: <>{box(9.5, 0.5, 13, 7)}{box(9.5, 24.5, 13, 7)}<Arrow x={16} y={23} r={90} len={8} /><Arrow x={16} y={9} r={-90} len={8} /></> },
  ],
];

const rotations = [
  { label: "左旋90", deg: "90°", art: <path transform="translate(6 0)" d={ROT} fill={G} /> },
  { label: "旋转180", deg: "180°", art: <path d="M1 3v11h11l-4-4q8-6 16 0l-4 4h11V3l-4 4Q16-5 5 7z" fill={G} /> },
  { label: "右旋90", deg: "90°", art: <path transform="translate(28 0) scale(-1 1)" d={ROT} fill={G} /> },
  { label: "左旋1", deg: "1°", art: <path transform="translate(6 0)" d={ROT} fill={G} /> },
  { label: "右旋1", deg: "1°", art: <path transform="translate(28 0) scale(-1 1)" d={ROT} fill={G} /> },
];

function ArrangeBar() {
  return (
    <div role="toolbar" aria-label="排列" className="mt-1 flex w-[40px] flex-col items-center self-start overflow-hidden rounded-[3px] border-r-2 border-[#8fa6c6] bg-linear-to-r from-[#edf4fd] to-[#dae6f3]">
      <span className="mt-[2px] mb-[3px] h-[2px] w-[30px] bg-[repeating-linear-gradient(to_right,#8ba3c7_0_3px,transparent_3px_5px)]" />
      {sideGroups.map((g, i) => (
        <div key={i} className="flex flex-col items-center">
          {g.map((b) => (
            <button key={b.label} type="button" aria-label={b.label} className="flex h-[38px] w-[38px] items-center justify-center">
              <Ico>{b.art}</Ico>
            </button>
          ))}
          <span className="mt-px mb-1 h-px w-[30px] bg-[#9aabc9]" />
        </div>
      ))}
      {rotations.map((r) => (
        <button key={r.label} type="button" aria-label={r.label} className="flex h-[38px] w-[38px] flex-col items-center pt-2">
          <svg width="32" height="15" viewBox="0 0 32 15" className="shrink-0" aria-hidden="true">{r.art}</svg>
          <span className="font-['DejaVu_Sans'] text-[11px] leading-3 text-[#777]">{r.deg}</span>
        </button>
      ))}
      <button type="button" aria-label="排列…" className="mt-[3px] flex h-[10px] w-full items-center justify-end bg-linear-to-r from-[#d5e1ee] to-[#93a9c5] pr-[2px]">
        <svg width="7" height="7" viewBox="0 0 7 7" aria-hidden="true"><path d="M1 1v5" stroke="#000" /><path d="M3 1v5l3-2.500z" fill="#000" stroke="#fff" strokeWidth="0.500" /></svg>
      </button>
    </div>
  );
}

function StatusBar() {
  return (
    <footer className="flex h-[21px] shrink-0 items-center bg-linear-to-b from-[#dce8f6] to-[#b0c3da] pt-[2px] pl-1 text-xs">
      <svg width="16" height="16" viewBox="0 0 16 16" aria-hidden="true">
        <path d="M6 1.500h7l-2.500 6h-7z" fill="#fff" stroke="#5d7396" />
        <path d="M.500 8.500l3-2M15.500 5.500l-3.500 3" stroke="#4b608a" />
        <path d="M.500 8.500h11l4-3v4.500l-4 4h-11z" fill="#5a719b" stroke="#3a4f78" />
        <path d="M.500 8.500h11v5.500h-11z" fill="#edf2f9" stroke="#4b608a" />
        <path d="M8 11h3v2H8z" fill="#2fc43a" />
      </svg>
      <span className="ml-[5px] w-[214px] truncate">打印机: Microsoft Print to PDF</span>
      <span className="mr-[5px] h-[19px] w-px bg-[#90a6c2]" />
      <svg width="16" height="16" viewBox="0 0 16 16" fill="none" aria-hidden="true">
        <path d="M.500 2.500h10l4 4v7.500h-14z" fill="#f6f9fd" stroke="#4b6489" />
        <path d="M7.500 2.500v11.500M.500 6.500h10M.500 10.500h14M10.500 2.500v4h4" stroke="#4b6489" />
      </svg>
      <span className="ml-[5px] flex flex-1 gap-[9px]">
        <span>纸张大小: A4</span>
        <span>项目宽度: 98.7毫米</span>
        <span>项目高度: 54.3毫米</span>
      </span>
      <span className="mr-[6px] h-[19px] w-px bg-[#90a6c2]" />
      <button type="button" className="flex items-center">
        <svg width="15" height="15" viewBox="0 0 15 15" fill="none" aria-hidden="true">
          <path d="M9 9l5 5" stroke="#c79a35" strokeWidth="2.500" /><circle cx="6" cy="6" r="5" fill="#e5f5fd" stroke="#58708f" /><path d="M3 6h6M6 3v6" stroke="#2d4a78" strokeWidth="1.500" />
        </svg>
        <span className="ml-[6px] w-[45px] text-left">284%</span>
        <Caret />
      </button>
      <svg width="9" height="9" viewBox="0 0 9 9" className="mt-1 mr-[2px] ml-[14px]" aria-hidden="true">
        <path d="M6 0h2v2h-2zM3 3h2v2h-2zM6 3h2v2h-2zM0 6h2v2h-2zM3 6h2v2h-2zM6 6h2v2h-2z" fill="#a3b1c4" />
      </svg>
    </footer>
  );
}

const backRows = ["址", "码", "址", "码", "司", "题", "术", "字", "程", "id", "示", "印", "置", "则"];

export default function App() {
  return (
    <div className="relative flex h-screen flex-col overflow-hidden bg-[#e4e4e4] font-['Noto_Sans','Noto_Sans_CJK_SC',sans-serif] text-xs text-black">
      <Defs />
      <div className="flex min-h-0 flex-1">
        <div className="flex w-2 shrink-0 flex-col overflow-hidden border-r border-[#6f7276] bg-linear-to-r from-[#f0f0f0] to-[#dcdcdc] text-[13px]">
          <div className="flex h-[33px] shrink-0 items-center justify-end bg-[#20222c] pb-1 text-[#c8c8c8]"><span>用</span></div>
          <div className="mt-[37px] mb-[9px] h-[142px] shrink-0 rounded-bl-[10px] bg-[#058bb5]" />
          {backRows.map((t, i) => (
            <div key={i} className={`flex flex-1 items-center justify-end whitespace-nowrap ${i === 4 || i === 5 ? "text-[#2b3f8c]" : "text-[#444]"}`}>{t}</div>
          ))}
        </div>
        <div className="flex min-w-0 flex-1 flex-col bg-[#d0ddee]">
          <TitleBar />
          <nav className="flex h-[28px] shrink-0 items-center gap-[17px] pl-3">
            {menus.map(([t, k]) => (
              <button key={k} type="button" className="text-xs">{t}(<u>{k}</u>)</button>
            ))}
          </nav>
          <Toolbars />
          <div className="flex min-h-0 flex-1">
            <SidePanel />
            <div className="w-[5px] shrink-0 bg-[#f0f0f0]" />
            <Workspace />
            <div className="mr-[3px] w-px bg-white" />
            <ArrangeBar />
          </div>
          <StatusBar />
        </div>
        <div className="flex w-2 shrink-0 flex-col border-l border-[#5f6670] bg-linear-to-r from-[#cfcfcf] to-[#e8e8e8]">
          <div className="h-[33px] bg-[#20222c]" />
          <div className="h-[38px] border-b border-[#cfcfcf]" />
        </div>
      </div>
      <div className="h-2 shrink-0 border-t border-[#6f7276] bg-linear-to-b from-[#cfcfcf] to-[#e8e8e8]" />
      <div className="absolute top-[773px] right-0 flex h-[24px] w-[31px] items-center justify-end overflow-hidden bg-white">
        <span className="w-[3px] text-sm font-bold text-[#1a7fe0]">英</span>
      </div>
      <svg width="32" height="32" viewBox="0 0 32 32" className="absolute top-[768px] right-[10px]" aria-hidden="true">
        <rect x="2.500" y="2.500" width="27" height="27" rx="4" transform="rotate(-12 16 16)" fill="#ee4f1e" />
        <path d="M25 8.500C18 6 8 8 7.500 12.500c-.500 5 15 2.500 15 7.500 0 4-9 5-15 3" fill="none" stroke="#fff" strokeWidth="4" />
      </svg>
    </div>
  );
}
